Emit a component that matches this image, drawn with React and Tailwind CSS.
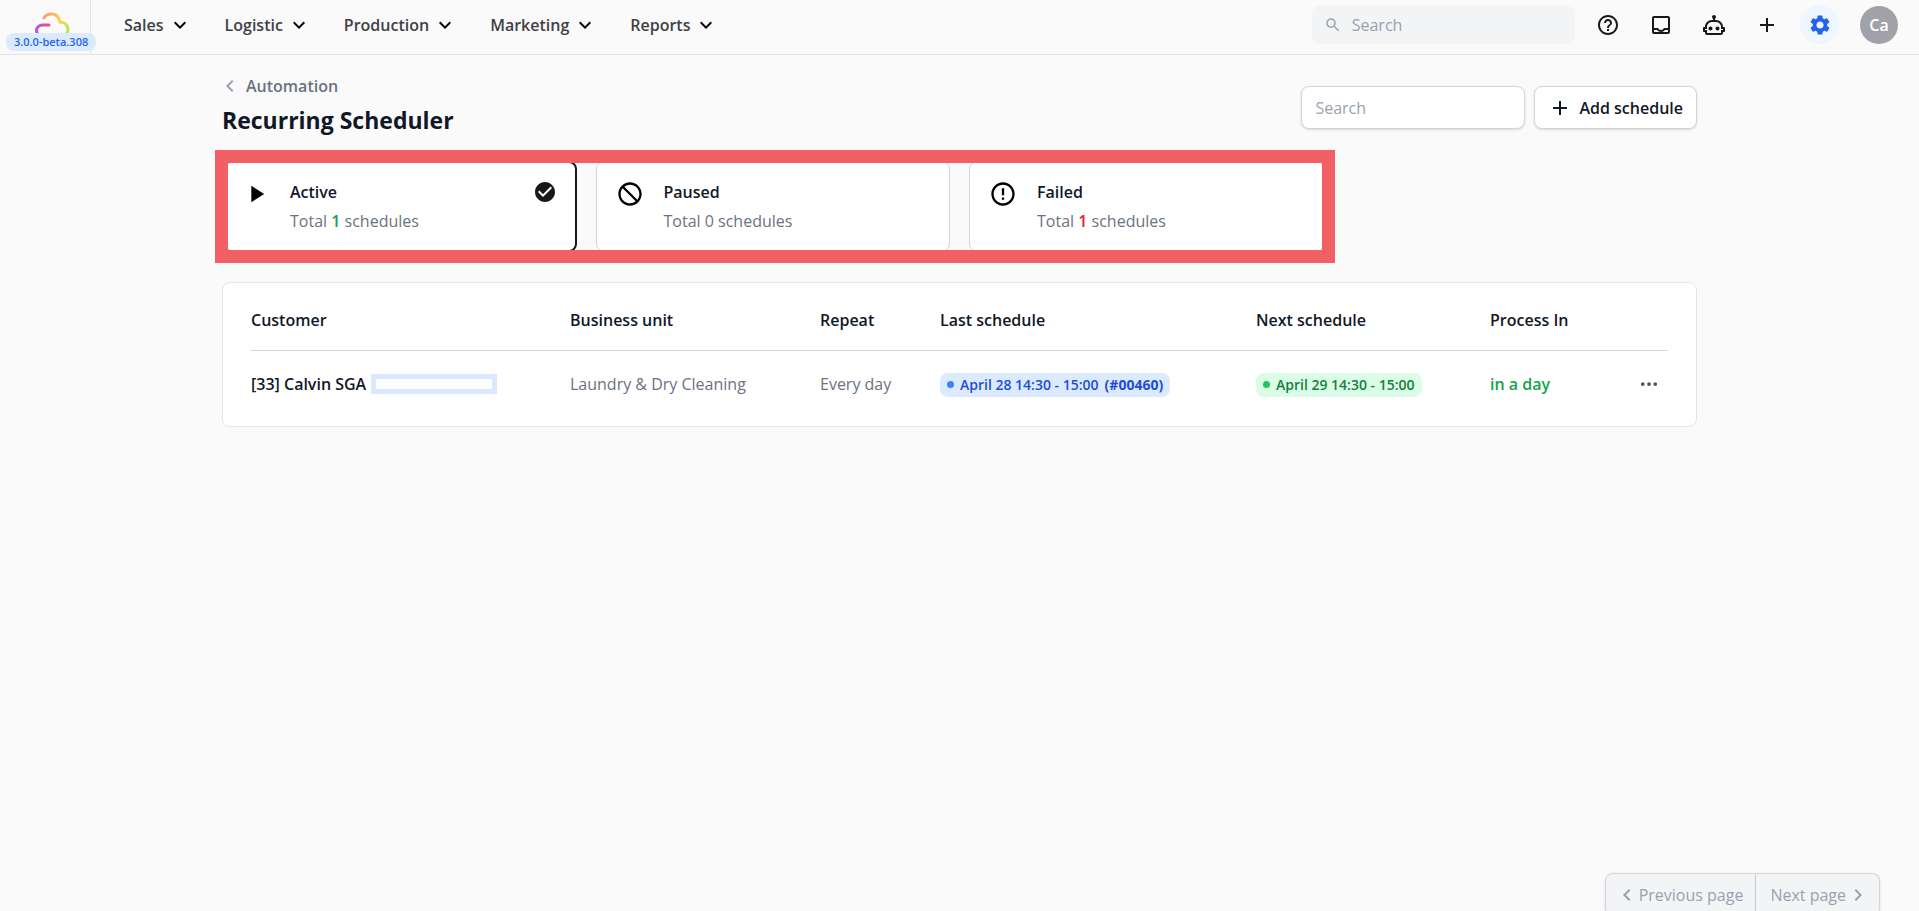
import { useState } from 'react';
import clsx from 'clsx';
import { BsThreeDots } from 'react-icons/bs';
import {
  MdAdd,
  MdCheckCircle,
  MdChevronLeft,
  MdChevronRight,
  MdErrorOutline,
  MdExpandMore,
  MdHelpOutline,
  MdNotInterested,
  MdPlayArrow,
  MdSearch,
  MdSettings,
} from 'react-icons/md';

const MENU = ['Sales', 'Logistic', 'Production', 'Marketing', 'Reports'];

const STATUSES = [
  { id: 'active', label: 'Active', total: 1, icon: MdPlayArrow, totalClass: 'font-semibold text-[#16a34a]' },
  { id: 'paused', label: 'Paused', total: 0, icon: MdNotInterested, totalClass: '' },
  { id: 'failed', label: 'Failed', total: 1, icon: MdErrorOutline, totalClass: 'font-semibold text-[#dc2626]' },
];

const SCHEDULES = [
  {
    id: 33,
    customer: '[33] Calvin SGA',
    unit: 'Laundry & Dry Cleaning',
    repeat: 'Every day',
    last: 'April 28 14:30 - 15:00',
    order: '(#00460)',
    next: 'April 29 14:30 - 15:00',
    processIn: 'in a day',
  },
];

/** ---------- ICONS ---------- */
function CloudLogo() {
  return (
    <svg width="36" height="26" viewBox="0 0 36 26" fill="none" strokeWidth="3" strokeLinecap="round" aria-hidden="true">
      <defs>
        <linearGradient id="cloud-top" x1="9" y1="4" x2="34" y2="22" gradientUnits="userSpaceOnUse">
          <stop stopColor="#ff9a76" />
          <stop offset="0.5" stopColor="#fcd34d" />
          <stop offset="1" stopColor="#a3f23c" />
        </linearGradient>
        <linearGradient id="cloud-left" x1="2" y1="20" x2="16" y2="12" gradientUnits="userSpaceOnUse">
          <stop stopColor="#a855f7" />
          <stop offset="1" stopColor="#f9477e" />
        </linearGradient>
      </defs>
      <path d="M10 6C11.500 3.300 14.300 2 17.500 2C22 2 25 5 26 10C31 10.500 34 13.500 34 17.500C34 21.500 31 24 27 24" stroke="url(#cloud-top)" />
      <path d="M15 13H9C5 13 2.500 15.500 2.500 18.800C2.500 22 5 24 8.500 24" stroke="url(#cloud-left)" />
    </svg>
  );
}

function InboxIcon() {
  return (
    <svg width="24" height="24" viewBox="0 0 24 24" fill="currentColor" fillRule="evenodd" aria-hidden="true">
      <path d="M19 3H5C3.900 3 3 3.900 3 5v14c0 1.100.9 2 2 2h14c1.100 0 2-.9 2-2V5c0-1.100-.9-2-2-2zM5 19v-2h3.100c.8 1.200 2.300 2 3.900 2s3.100-.8 3.900-2H19v2zM19 15h-4.200c-.2 1.200-1.400 2-2.800 2s-2.600-.8-2.800-2H5V5h14z" />
    </svg>
  );
}

function RobotIcon() {
  return (
    <svg width="24" height="24" viewBox="0 0 24 24" fill="currentColor" aria-hidden="true">
      <path d="M17.500 15.500C17.500 16.610 16.610 17.500 15.500 17.500S13.500 16.610 13.500 15.500 14.400 13.500 15.500 13.500 17.500 14.400 17.500 15.500M8.500 13.500C7.400 13.500 6.500 14.400 6.500 15.500S7.400 17.500 8.500 17.500 10.500 16.610 10.500 15.500 9.610 13.500 8.500 13.500M23 15V18C23 18.550 22.550 19 22 19H21V20C21 21.110 20.110 22 19 22H5C3.900 22 3 21.110 3 20V19H2C1.450 19 1 18.550 1 18V15C1 14.450 1.450 14 2 14H3C3 10.130 6.130 7 10 7H11V5.730C10.400 5.390 10 4.740 10 4C10 2.900 10.900 2 12 2S14 2.900 14 4C14 4.740 13.600 5.390 13 5.730V7H14C17.870 7 21 10.130 21 14H22C22.550 14 23 14.450 23 15M21 16H19V14C19 11.240 16.760 9 14 9H10C7.240 9 5 11.240 5 14V16H3V17H5V20H19V17H21V16Z" />
    </svg>
  );
}

/** ---------- HEADER ---------- */
function Header() {
  return (
    <header className="flex h-[55px] shrink-0 items-stretch border-b border-zinc-200">
      <a href="#home" aria-label="Home" className="relative flex w-[91px] justify-center border-r border-zinc-200 pt-3 pl-[14px]">
        <CloudLogo />
        <span className="absolute top-[33px] left-[6px] rounded-lg bg-blue-100 px-2 text-[11px] leading-[18px] font-semibold whitespace-nowrap text-[#2563eb]">
          3.0.0-beta.308
        </span>
      </a>

      <nav className="ml-[33px] flex items-center gap-[33px] pb-[5px]">
        {MENU.map((item) => (
          <button key={item} className="flex items-center gap-1 font-semibold text-zinc-700">
            {item}
            <MdExpandMore size={24} className="text-zinc-950" />
          </button>
        ))}
      </nav>

      <div className="ml-auto flex items-center pr-[21px] pb-[5px]">
        <label className="flex h-[38px] w-[263px] items-center gap-[10px] rounded-lg bg-gray-100 px-3 text-gray-400">
          <MdSearch size={20} />
          <input type="search" aria-label="Search everything" placeholder="Search" className="w-full bg-transparent outline-none placeholder:text-gray-400" />
        </label>
        <div className="ml-[13px] flex items-center gap-[14px] text-zinc-900">
          <button aria-label="Help" className="flex size-[39px] items-center justify-center"><MdHelpOutline size={24} /></button>
          <button aria-label="Inbox" className="flex size-[39px] items-center justify-center"><InboxIcon /></button>
          <button aria-label="Assistant" className="flex size-[39px] items-center justify-center"><RobotIcon /></button>
          <button aria-label="Create" className="flex size-[39px] items-center justify-center"><MdAdd size={24} /></button>
          <button aria-label="Settings" className="flex size-[39px] items-center justify-center rounded-full bg-blue-50 text-[#2563eb]"><MdSettings size={24} /></button>
        </div>
        <button className="ml-[21px] size-[38px] rounded-full bg-[#a1a1aa] font-semibold text-white">Ca</button>
      </div>
    </header>
  );
}

/** ---------- STATUS CARDS ---------- */
function StatusCard({ status, selected, onSelect }) {
  const Icon = status.icon;

  return (
    <button
      onClick={() => onSelect(status.id)}
      aria-pressed={selected}
      className={clsx(
        'flex items-start rounded-lg bg-white text-left',
        selected ? 'border-2 border-zinc-900 px-[18px] py-[17px]' : 'border border-gray-300 px-[19px] py-[18px]'
      )}
    >
      <Icon size={28} className="mr-5 shrink-0 text-black" />
      <span className="grow">
        <span className="block font-semibold text-gray-900">{status.label}</span>
        <span className="mt-[5px] block text-[#6b7280]">
          Total <span className={status.totalClass}>{status.total}</span> schedules
        </span>
      </span>
      {selected && <MdCheckCircle size={24} className="shrink-0 text-zinc-900" />}
    </button>
  );
}

/** ---------- TABLE ---------- */
function ScheduleTable() {
  return (
    <div className="mt-[30px] rounded-lg border border-zinc-200 bg-white px-7 py-[9px]">
      <table className="w-full table-fixed text-left">
        <colgroup>
          <col className="w-[319px]" />
          <col className="w-[250px]" />
          <col className="w-[120px]" />
          <col className="w-[316px]" />
          <col className="w-[234px]" />
          <col />
          <col className="w-[39px]" />
        </colgroup>
        <thead>
          <tr className="h-[58px] border-b border-gray-300 text-gray-900 [&>th]:pb-[2px] [&>th]:font-semibold">
            <th>Customer</th>
            <th>Business unit</th>
            <th>Repeat</th>
            <th>Last schedule</th>
            <th>Next schedule</th>
            <th>Process In</th>
            <th aria-label="Actions" />
          </tr>
        </thead>
        <tbody>
          {SCHEDULES.map((row) => (
            <tr key={row.id} className="h-[67px] text-[#6b7280]">
              <td>
                <div className="flex items-center gap-[5px] font-semibold text-gray-900">
                  {row.customer}
                  <span className="h-5 w-[126px] border-[5px] border-[#d9e8ff]" />
                </div>
              </td>
              <td>{row.unit}</td>
              <td>{row.repeat}</td>
              <td>
                <span className="inline-flex h-6 items-center rounded-lg bg-blue-100 px-[7px] align-middle text-sm font-semibold text-[#1d4ed8]">
                  <span className="mr-[6px] size-[7px] rounded-full bg-[#3b82f6]" />
                  {row.last}
                  <span className="ml-[6px] font-bold">{row.order}</span>
                </span>
              </td>
              <td>
                <span className="inline-flex h-6 items-center rounded-lg bg-green-100 px-[7px] align-middle text-sm font-semibold text-[#15803d]">
                  <span className="mr-[6px] size-[7px] rounded-full bg-[#22c55e]" />
                  {row.next}
                </span>
              </td>
              <td className="font-semibold text-[#16a34a]">{row.processIn}</td>
              <td>
                <button aria-label="Schedule actions" className="flex w-full justify-center text-gray-600">
                  <BsThreeDots size={20} />
                </button>
              </td>
            </tr>
          ))}
        </tbody>
      </table>
    </div>
  );
}

/**
 * Recurring Scheduler page
 */
export default function App() {
  const [status, setStatus] = useState('active');

  return (
    <div className="flex h-screen flex-col overflow-hidden bg-[#fafafa] font-['Open_Sans',sans-serif] text-base">
      <Header />

      <main className="mx-auto min-h-0 w-full max-w-[1475px] grow pt-[19px]">
        {/* Title & actions */}
        <div className="flex items-start justify-between">
          <div>
            <a href="#automation" className="flex items-center gap-1 font-semibold text-[#6b7280]">
              <MdChevronLeft size={24} className="-ml-1 text-gray-400" />
              Automation
            </a>
            <h1 className="mt-[6px] mb-px text-[23px] leading-8 font-bold text-gray-900">Recurring Scheduler</h1>
          </div>

          <div className="mt-3 flex gap-[9px]">
            <input
              type="search"
              aria-label="Search schedules"
              placeholder="Search"
              className="h-[43px] w-[224px] rounded-lg border border-gray-300 bg-white px-[13px] shadow-sm placeholder:text-gray-400"
            />
            <button className="flex h-[43px] items-center gap-[7px] rounded-lg border border-gray-300 bg-white px-[13px] font-semibold text-gray-900 shadow-sm">
              <MdAdd size={24} />
              Add schedule
            </button>
          </div>
        </div>

        {/* Status filter */}
        <div className="relative mt-6">
          <div className="grid grid-cols-4 gap-[19px]">
            {STATUSES.map((item) => (
              <StatusCard key={item.id} status={item} selected={item.id === status} onSelect={setStatus} />
            ))}
          </div>
          <div className="pointer-events-none absolute -top-[11px] -bottom-[11px] -left-[7px] w-[1120px] border-[13px] border-[#f25f64]" />
        </div>

        <ScheduleTable />
      </main>

      {/* Pagination */}
      <footer className="flex h-[38px] shrink-0 items-start justify-end pr-[39px] text-gray-400">
        <button className="flex h-[43px] items-center rounded-l-lg border border-gray-300 bg-gray-100 pr-3 pl-[9px] shadow-sm">
          <MdChevronLeft size={24} />
          Previous page
        </button>
        <button className="flex h-[43px] items-center rounded-r-lg border border-l-0 border-gray-300 bg-gray-100 pr-[9px] pl-[14px] shadow-sm">
          Next page
          <MdChevronRight size={24} />
        </button>
      </footer>
    </div>
  );
}
